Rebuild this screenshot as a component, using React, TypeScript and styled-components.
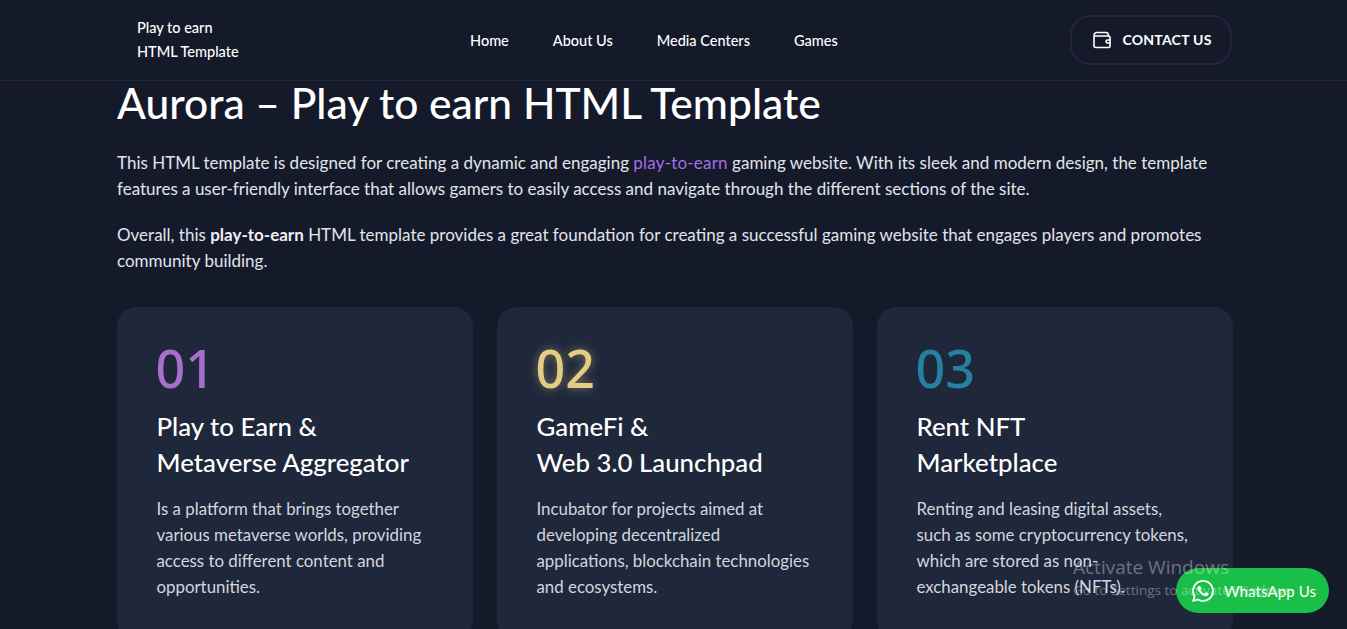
import React, { FC } from "react";
import styled, { createGlobalStyle } from "styled-components";

const GlobalStyle = createGlobalStyle`
  html, body {
    margin: 0;
    padding: 0;
    height: 100%;
    overflow: hidden;
    background: #151a2b;
  }

  * {
    box-sizing: border-box;
  }

  body {
    font-family: "Lato", "Noto Sans", sans-serif;
    color: #fff;
  }
`

const Page = styled.div`
  height: 100vh;
  overflow: hidden;
  position: relative;
  background: #151a2b;
`

const Header = styled.header`
  height: 81px;
  border-bottom: 1px solid #242538;
  padding: 0 115px 0 117px;
  display: flex;
  align-items: center;
`

const Logo = styled.div`
  width: 353px;
  padding-left: 20px;
  font-size: 14.5px;
  line-height: 24px;
  font-weight: 500;
  margin-top: -1px;
`

const Nav = styled.nav`
  display: flex;
  gap: 44px;
`

const NavLink = styled.a`
  font-size: 14.5px;
  font-weight: 500;
  color: #fff;
`

const ContactButton = styled.a`
  width: 162px;
  height: 50px;
  border: 2px solid #242538;
  border-radius: 20px;
  padding-left: 3px;
  display: flex;
  align-items: center;
  justify-content: center;
  gap: 11px;
  font-size: 14px;
  font-weight: 700;
  letter-spacing: 0.25px;
  color: #fff;
  margin: -1px 0 0 auto;
`

const Main = styled.main`
  padding: 0 114px 0 117px;
`

const Title = styled.h1`
  margin: 0;
  font-size: 42.5px;
  line-height: 44px;
  font-weight: 500;
`

const Intro = styled.p`
  margin: 25px 0 0;
  font-size: 17px;
  line-height: 26px;
  color: #e2e4ea;

  & + & {
    margin-top: 20px;
  }
`

const Accent = styled.a`
  color: #a56ee2;
  letter-spacing: 0.2px;
`

const Strong = styled.b`
  font-weight: 700;
  color: #eef0f4;
`

const Cards = styled.section`
  display: grid;
  grid-template-columns: repeat(3, 356px);
  gap: 24px;
  margin-top: 33px;
`

const Card = styled.article`
  background: #1f273b;
  border-radius: 20px;
  padding: 29px 20px 40px 39.5px;
`

const CardNumber = styled.div<{ $color: string; $glow?: boolean }>`
  font-family: "Noto Sans", sans-serif;
  font-size: 52px;
  line-height: 64px;
  font-weight: 500;
  margin-left: -1px;
  color: ${props => props.$color};
  text-shadow: ${props => (props.$glow ? `0 0 10px ${props.$color}80` : "none")};
`

const CardTitle = styled.h3`
  margin: 8px 0 0;
  font-size: 25.8px;
  line-height: 36px;
  font-weight: 500;
`

const CardText = styled.p`
  margin: 16px 0 0;
  font-size: 16.85px;
  line-height: 26px;
  color: #d3d6de;
`

const Watermark = styled.div`
  position: absolute;
  left: 1073px;
  top: 554px;
  color: rgba(255, 255, 255, 0.36);
  font-family: "Open Sans", sans-serif;
  pointer-events: none;
  z-index: 3;
`

const WatermarkTitle = styled.div`
  font-size: 19px;
  line-height: 26px;
`

const WatermarkText = styled.div`
  font-size: 13.5px;
  line-height: 20px;
`

const WhatsApp = styled.a`
  position: absolute;
  left: 1176px;
  top: 568px;
  width: 153px;
  height: 45px;
  border-radius: 23px;
  background: #1abf47;
  display: flex;
  align-items: center;
  gap: 9px;
  padding-left: 15px;
  font-size: 15px;
  letter-spacing: 0.1px;
  color: #fff;
  z-index: 2;
`

const WalletIcon: FC = () => (
  <svg width="18" height="18" viewBox="0 0 18 18" fill="none" stroke="#fff" strokeWidth="1.6" strokeLinecap="round" strokeLinejoin="round">
    <path d="M1 5V14.5C1 15.6 1.9 16.5 3 16.5H15.5C16.5 16.5 17 16 17 15V6.5C17 5.6 16.5 5 15.5 5H1ZM1 5C1 3 2 1.5 4 1.5H13C14.5 1.5 15.5 2.5 15.5 5" />
    <path d="M17 9H14.7C13.7 9 13 9.7 13 10.5C13 11.3 13.7 12 14.7 12H17" />
  </svg>
)

const WhatsAppIcon: FC = () => (
  <svg width="24" height="24" viewBox="0 0 24 24" fill="#fff">
    <path d="M12.04 1C6 1 1.1 5.9 1.1 11.94c0 1.93.5 3.81 1.46 5.47L1 23l5.74-1.5a10.9 10.9 0 0 0 5.3 1.35c6.03 0 10.94-4.9 10.94-10.94C22.98 5.9 18.07 1 12.04 1Zm0 19.98c-1.63 0-3.23-.44-4.63-1.27l-.33-.2-3.41.89.91-3.32-.22-.34a9.03 9.03 0 0 1-1.38-4.8c0-5 4.07-9.07 9.07-9.07 5 0 9.06 4.07 9.06 9.07 0 5-4.07 9.04-9.07 9.04Z" />
    <path d="M17 14.2c-.27-.14-1.6-.79-1.85-.88-.25-.09-.43-.14-.61.14-.18.27-.7.88-.86 1.06-.16.18-.32.2-.59.07-.27-.14-1.15-.42-2.19-1.35-.81-.72-1.36-1.62-1.52-1.89-.16-.27-.02-.42.12-.56.12-.12.27-.32.41-.48.14-.16.18-.27.27-.45.09-.18.05-.34-.02-.48-.07-.14-.61-1.47-.84-2.01-.22-.53-.44-.46-.61-.47h-.52c-.18 0-.48.07-.73.34-.25.27-.95.93-.95 2.27s.98 2.63 1.11 2.81c.14.18 1.92 2.93 4.65 4.11.65.28 1.16.45 1.55.57.65.21 1.25.18 1.72.11.52-.08 1.6-.65 1.83-1.29.23-.63.23-1.18.16-1.29-.07-.11-.25-.18-.52-.32Z" />
  </svg>
)

type CardData = {
  number: string
  color: string
  glow?: boolean
  title: string[]
  text: string[]
}

const cards: CardData[] = [
  {
    number: "01",
    color: "#a66fcb",
    title: ["Play to Earn &", "Metaverse Aggregator"],
    text: ["Is a platform that brings together", "various metaverse worlds, providing", "access to different content and", "opportunities."],
  },
  {
    number: "02",
    color: "#e3cd84",
    glow: true,
    title: ["GameFi &", "Web 3.0 Launchpad"],
    text: ["Incubator for projects aimed at", "developing decentralized", "applications, blockchain technologies", "and ecosystems."],
  },
  {
    number: "03",
    color: "#26809f",
    title: ["Rent NFT", "Marketplace"],
    text: ["Renting and leasing digital assets,", "such as some cryptocurrency tokens,", "which are stored as non-", "exchangeable tokens (NFTs)."],
  },
]

const withBreaks = (lines: string[]) =>
  lines.map((line, i) => (
    <React.Fragment key={line}>
      {i > 0 && <br />}
      {line}
    </React.Fragment>
  ))

export default function App() {
  return (
    <Page>
      <GlobalStyle />
      <Header>
        <Logo>
          Play to earn
          <br />
          HTML Template
        </Logo>
        <Nav>
          <NavLink>Home</NavLink>
          <NavLink>About Us</NavLink>
          <NavLink>Media Centers</NavLink>
          <NavLink>Games</NavLink>
        </Nav>
        <ContactButton>
          <WalletIcon />
          CONTACT US
        </ContactButton>
      </Header>
      <Main>
        <Title>Aurora – Play to earn HTML Template</Title>
        <Intro>
          This HTML template is designed for creating a dynamic and engaging <Accent>play-to-earn</Accent> gaming website. With its sleek and modern design, the template
          <br />
          features a user-friendly interface that allows gamers to easily access and navigate through the different sections of the site.
        </Intro>
        <Intro>
          Overall, this <Strong>play-to-earn</Strong> HTML template provides a great foundation for creating a successful gaming website that engages players and promotes
          <br />
          community building.
        </Intro>
        <Cards>
          {cards.map(card => (
            <Card key={card.number}>
              <CardNumber $color={card.color} $glow={card.glow}>{card.number}</CardNumber>
              <CardTitle>{withBreaks(card.title)}</CardTitle>
              <CardText>{withBreaks(card.text)}</CardText>
            </Card>
          ))}
        </Cards>
      </Main>
      <WhatsApp>
        <WhatsAppIcon />
        WhatsApp Us
      </WhatsApp>
      <Watermark>
        <WatermarkTitle>Activate Windows</WatermarkTitle>
        <WatermarkText>Go to Settings to activate Windows.</WatermarkText>
      </Watermark>
    </Page>
  )
}
